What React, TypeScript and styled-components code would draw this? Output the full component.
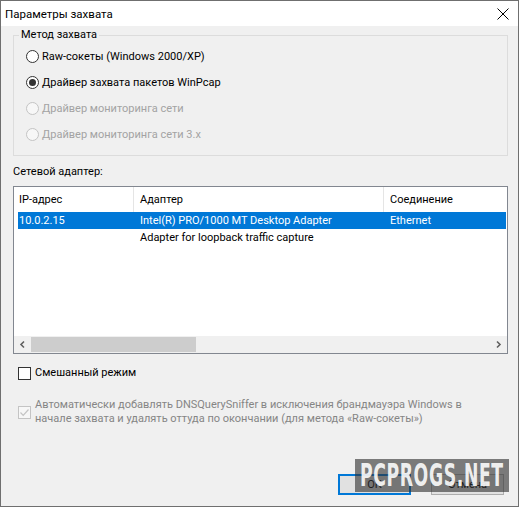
import React from 'react';
import styled, { createGlobalStyle, css } from 'styled-components';

const Global = createGlobalStyle`
  html, body { margin: 0; padding: 0; background: #f0f0f0; }
  * { box-sizing: border-box; }
`;

const Window = styled.div`
  position: relative;
  width: 519px;
  height: 507px;
  border: 1px solid #6f6f6f;
  background: #f0f0f0;
  display: flex;
  flex-direction: column;
  font-family: Roboto, "Liberation Sans", Arial, sans-serif;
  font-size: 11px;
  color: #000;
`;

const TitleBar = styled.div`
  height: 25px;
  flex: none;
  background: #fff;
  display: flex;
  align-items: center;
  justify-content: space-between;
  padding-left: 4px;
  padding-right: 9px;
`;

const TitleText = styled.span`
  font-size: 11.5px;
  line-height: 16px;
`;

const Body = styled.div`
  flex: 1;
  display: flex;
  flex-direction: column;
  padding: 0 10px 11px 12px;
`;

const Group = styled.fieldset`
  margin: 1px 0 0;
  padding: 0 0 8px 5px;
  border: 1px solid #dcdcdc;
  min-width: 0;
`;

const Legend = styled.legend`
  padding: 0 2px;
  line-height: 16px;
`;

const RadioRow = styled.label<{ $disabled?: boolean }>`
  display: flex;
  align-items: center;
  height: 26px;
  padding-left: 7px;
  gap: 3px;
  color: ${p => (p.$disabled ? '#a3a3a3' : '#000')};
`;

const RadioCircle = styled.span<{ $checked?: boolean; $disabled?: boolean }>`
  width: 13px;
  height: 13px;
  border-radius: 50%;
  border: 1px solid ${p => (p.$disabled ? '#c4c4c4' : '#333')};
  background: ${p => (p.$disabled ? '#f7f7f7' : '#fff')};
  display: flex;
  align-items: center;
  justify-content: center;
  flex: none;
  ${p =>
    p.$checked &&
    css`
      &::after {
        content: '';
        width: 7px;
        height: 7px;
        border-radius: 50%;
        background: #333;
      }
    `}
`;

const SectionLabel = styled.div`
  margin-top: 8px;
  line-height: 16px;
`;

const ListBox = styled.div`
  margin-top: 6px;
  height: 168px;
  border: 1px solid #828790;
  background: #fff;
  display: flex;
  flex-direction: column;
`;

const Table = styled.div`
  flex: 1;
  padding: 0 1px 0 4px;
`;

const Grid = styled.div<{ $header?: boolean; $selected?: boolean }>`
  display: grid;
  grid-template-columns: 116px 250px 1fr;
  height: ${p => (p.$header ? '25px' : '17px')};
  background: ${p => (p.$selected ? '#0078d7' : 'transparent')};
  color: ${p => (p.$selected ? '#fff' : '#000')};
`;

const Cell = styled.div<{ $first?: boolean; $sep?: boolean }>`
  display: flex;
  align-items: center;
  padding-left: ${p => (p.$first ? '1px' : '6px')};
  white-space: nowrap;
  overflow: hidden;
  border-right: ${p => (p.$sep ? '1px solid #e5e5e5' : 'none')};
`;

const ScrollBar = styled.div`
  height: 17px;
  flex: none;
  display: flex;
  background: #f0f0f0;
`;

const ScrollArrow = styled.div`
  width: 17px;
  height: 17px;
  flex: none;
  display: flex;
  align-items: center;
  justify-content: center;
`;

const ScrollTrack = styled.div`
  flex: 1;
  display: flex;
  align-items: center;
`;

const Thumb = styled.div`
  width: 165px;
  height: 15px;
  background: #cdcdcd;
`;

const CheckRow = styled.label<{ $disabled?: boolean; $top: number }>`
  display: flex;
  align-items: center;
  gap: 4px;
  margin-top: ${p => p.$top}px;
  padding-left: 5px;
  line-height: ${p => (p.$disabled ? '14px' : '16px')};
  color: ${p => (p.$disabled ? '#858585' : '#000')};
`;

const CheckBox = styled.span<{ $disabled?: boolean }>`
  width: 13px;
  height: 13px;
  flex: none;
  border: 1px solid ${p => (p.$disabled ? '#c4c4c4' : '#333')};
  background: ${p => (p.$disabled ? '#f7f7f7' : '#fff')};
  display: flex;
  align-items: center;
  justify-content: center;
`;

const ButtonRow = styled.div`
  margin-top: auto;
  display: flex;
  justify-content: flex-end;
  gap: 20px;
  padding-right: 4px;
`;

const Button = styled.button<{ $default?: boolean }>`
  width: 73px;
  height: 21px;
  padding: 0;
  font: inherit;
  color: #000;
  background: #e1e1e1;
  border: ${p => (p.$default ? '2px solid #0078d7' : '1px solid #adadad')};
`;

const Watermark = styled.div`
  position: absolute;
  left: 354px;
  top: 458px;
  width: 154px;
  height: 33px;
  background: rgba(50, 50, 50, 0.62);
  display: flex;
  align-items: center;
  justify-content: center;
  overflow: hidden;
`;

const WatermarkText = styled.span`
  font-family: "DejaVu Sans", sans-serif;
  font-stretch: condensed;
  font-weight: bold;
  font-size: 32px;
  letter-spacing: 1px;
  color: rgba(255, 255, 255, 0.9);
  transform: scaleX(0.6);
  white-space: nowrap;
  line-height: 33px;
`;

const radios = [
  { label: 'Raw-сокеты (Windows 2000/XP)', checked: false, disabled: false },
  { label: 'Драйвер захвата пакетов WinPcap', checked: true, disabled: false },
  { label: 'Драйвер мониторинга сети', checked: false, disabled: true },
  { label: 'Драйвер мониторинга сети 3.x', checked: false, disabled: true },
];

const rows = [
  { ip: '10.0.2.15', adapter: 'Intel(R) PRO/1000 MT Desktop Adapter', conn: 'Ethernet', selected: true },
  { ip: '', adapter: 'Adapter for loopback traffic capture', conn: '', selected: false },
];

export default function App() {
  return (
    <>
      <Global />
      <Window>
        <TitleBar>
          <TitleText>Параметры захвата</TitleText>
          <svg width="12" height="12" viewBox="0 0 12 12">
            <path d="M0.5 0.5 L11.5 11.5 M11.5 0.5 L0.5 11.5" stroke="#000" strokeWidth="1" fill="none" />
          </svg>
        </TitleBar>
        <Body>
          <Group>
            <Legend>Метод захвата</Legend>
            {radios.map(r => (
              <RadioRow key={r.label} $disabled={r.disabled}>
                <RadioCircle $checked={r.checked} $disabled={r.disabled} />
                <span>{r.label}</span>
              </RadioRow>
            ))}
          </Group>
          <SectionLabel>Сетевой адаптер:</SectionLabel>
          <ListBox>
            <Table>
              <Grid $header>
                <Cell $first $sep>IP-адрес</Cell>
                <Cell $sep>Адаптер</Cell>
                <Cell>Соединение</Cell>
              </Grid>
              {rows.map(r => (
                <Grid key={r.adapter} $selected={r.selected}>
                  <Cell $first>{r.ip}</Cell>
                  <Cell>{r.adapter}</Cell>
                  <Cell>{r.conn}</Cell>
                </Grid>
              ))}
            </Table>
            <ScrollBar>
              <ScrollArrow>
                <svg width="17" height="17" viewBox="0 0 17 17">
                  <path d="M10 5.5 L7 8.5 L10 11.5" stroke="#606060" strokeWidth="1.6" fill="none" />
                </svg>
              </ScrollArrow>
              <ScrollTrack>
                <Thumb />
              </ScrollTrack>
              <ScrollArrow>
                <svg width="17" height="17" viewBox="0 0 17 17">
                  <path d="M7 5.5 L10 8.5 L7 11.5" stroke="#606060" strokeWidth="1.6" fill="none" />
                </svg>
              </ScrollArrow>
            </ScrollBar>
          </ListBox>
          <CheckRow $top={11}>
            <CheckBox />
            <span>Смешанный режим</span>
          </CheckRow>
          <CheckRow $top={17} $disabled>
            <CheckBox $disabled>
              <svg width="11" height="11" viewBox="0 0 11 11">
                <path d="M1.5 5.5 L4.2 8.3 L9.5 2.5" stroke="#c4c4c4" strokeWidth="1.2" fill="none" />
              </svg>
            </CheckBox>
            <span>
              Автоматически добавлять DNSQuerySniffer в исключения брандмауэра Windows в
              <br />
              начале захвата и удалять оттуда по окончании (для метода «Raw-сокеты»)
            </span>
          </CheckRow>
          <ButtonRow>
            <Button $default>OK</Button>
            <Button>Отмена</Button>
          </ButtonRow>
        </Body>
        <Watermark>
          <WatermarkText>PCPROGS.NET</WatermarkText>
        </Watermark>
      </Window>
    </>
  );
}
